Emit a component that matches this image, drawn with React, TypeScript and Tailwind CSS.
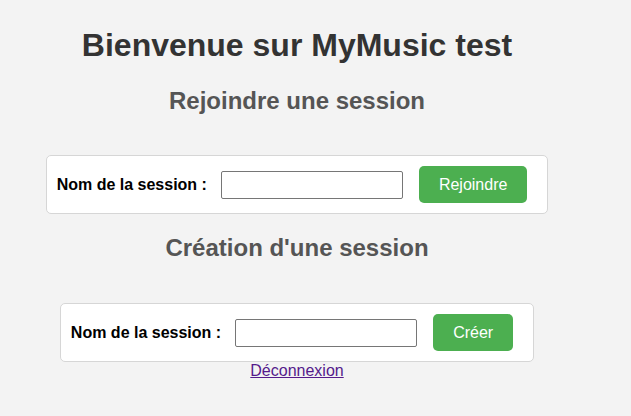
import React from 'react';

const font = { fontFamily: '"Liberation Sans", Arial, sans-serif' };

type SessionFormProps = {
  buttonLabel: string;
};

const SessionForm: React.FC<SessionFormProps> = ({ buttonLabel }) => {
  return (
    <form
      className="flex items-center bg-white border border-[#d6d6d6] rounded-[5px] pl-[10px] pr-[20px] py-[10px]"
      onSubmit={(e) => e.preventDefault()}
    >
      <label className="text-[16px] font-bold text-black leading-[18px] mr-[14px]">
        Nom de la session :
      </label>
      <input
        type="text"
        className="w-[182px] h-[28px] bg-white border border-[#767676] rounded-[2px] px-1 text-[13px] outline-none"
      />
      <button
        type="submit"
        className="ml-[16px] h-[37px] px-[20px] bg-[#4caf50] text-white text-[16px] rounded-[5px]"
      >
        {buttonLabel}
      </button>
    </form>
  );
};

const App: React.FC = () => {
  return (
    <div className="min-h-[416px] w-full bg-[#f3f3f3]" style={font}>
      <div className="w-[594px] flex flex-col items-center pt-[27px]">
        <h1 className="text-[32px] font-bold text-[#333333] leading-[37px]">
          Bienvenue sur MyMusic test
        </h1>

        <h2 className="mt-[23px] text-[24px] font-bold text-[#555555] leading-[28px]">
          Rejoindre une session
        </h2>
        <div className="mt-[40px]">
          <SessionForm buttonLabel="Rejoindre" />
        </div>

        <h2 className="mt-[20px] text-[24px] font-bold text-[#555555] leading-[28px]">
          Création d'une session
        </h2>
        <div className="mt-[41px]">
          <SessionForm buttonLabel="Créer" />
        </div>

        <a href="#" className="text-[16px] leading-[18px] text-[#551a8b] underline">
          Déconnexion
        </a>
      </div>
    </div>
  );
};

export default App;
